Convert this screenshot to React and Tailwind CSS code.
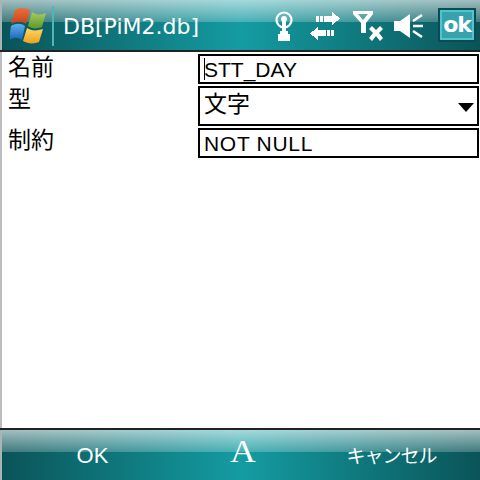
import React from "react";

const barBg =
  "bg-[linear-gradient(180deg,rgba(255,255,255,0.62)_0px,rgba(255,255,255,0.22)_22px,transparent_22px),linear-gradient(90deg,#0a5458_0%,#149ca2_50%,#0a5458_100%)]";

const WinLogo = () => (
  <svg width="36" height="36" viewBox="0 0 36 36" className="shrink-0">
    <defs>
      <linearGradient id="r" x1="0" y1="0" x2="0" y2="1">
        <stop offset="0" stopColor="#e8703a" />
        <stop offset="1" stopColor="#c8401c" />
      </linearGradient>
      <linearGradient id="g" x1="0" y1="0" x2="0" y2="1">
        <stop offset="0" stopColor="#a8cc60" />
        <stop offset="1" stopColor="#5c9a2c" />
      </linearGradient>
      <linearGradient id="b" x1="0" y1="0" x2="0" y2="1">
        <stop offset="0" stopColor="#5cb0ee" />
        <stop offset="1" stopColor="#1c64b8" />
      </linearGradient>
      <linearGradient id="y" x1="0" y1="0" x2="0" y2="1">
        <stop offset="0" stopColor="#fcd860" />
        <stop offset="1" stopColor="#f0a020" />
      </linearGradient>
    </defs>
    <path d="M5 2 C9 -1 15 0 20 2 L16 16 C12 13 7 13 1 16 Z" fill="url(#r)" />
    <path d="M22 4 C26 7 31 7 36 5 L32 19 C27 21 22 21 18 18 Z" fill="url(#g)" />
    <path d="M1 18 C6 15 11 15 15 18 L12 32 C8 29 4 29 -1 32 Z" fill="url(#b)" />
    <path d="M17 20 C21 23 27 23 33 21 L29 34 C24 36 18 36 13 33 Z" fill="url(#y)" />
  </svg>
);

const Antenna = () => (
  <svg width="18" height="30" viewBox="0 0 18 30" fill="white" shapeRendering="crispEdges">
    <circle cx="9" cy="9" r="7.5" fill="none" stroke="white" strokeWidth="2.2" shapeRendering="auto" />
    <circle cx="9" cy="8" r="3" shapeRendering="auto" />
    <rect x="7" y="9" width="4" height="12" />
    <path d="M5 20h8v3h2v7H3v-7h2z" />
  </svg>
);

const Sync = () => (
  <svg width="30" height="28" viewBox="0 0 30 28" fill="white" shapeRendering="crispEdges">
    <path d="M6 4h3v6H6zM10 4h3v6h-3zM14 4h8V0l8 6.5L22 13v-3h-8z" />
    <path d="M8 15v3h8v6H8v4L0 21.5zM17 18h3v6h-3zM21 18h3v6h-3z" />
  </svg>
);

const NoSignal = () => (
  <svg width="30" height="30" viewBox="0 0 30 30" fill="white">
    <path d="M0 0h20v3l-7 9v10H8V12L0 3zM5 3l5 6 5-6z" fillRule="evenodd" />
    <path d="M16 18l3-3 4 4 4-4 3 3-4 4 4 5-3 3-4-5-4 5-3-3 4-5z" />
  </svg>
);

const Speaker = () => (
  <svg width="30" height="24" viewBox="0 0 30 24" fill="white">
    <path d="M0 7h6l10-7v24L6 17H0z" />
    <path d="M19 7l9-6M19 12h10M19 17l9 6" stroke="white" strokeWidth="2.5" fill="none" />
  </svg>
);

const OkBox = () => (
  <div className="w-[38px] h-[34px] border-2 border-[#0e4a50] bg-[#37a2aa] shrink-0">
    <div className="w-full h-full border-2 border-[#4cc6d0] flex items-center justify-center">
      <span className="text-white text-[22px] font-bold leading-none font-['DejaVu_Sans'] tracking-[-1px]">ok</span>
    </div>
  </div>
);

const Field = ({ children, className }) => (
  <div className={`border-2 border-black flex items-center pl-[4px] text-[21px] leading-none text-black ${className}`}>
    {children}
  </div>
);

export default function App() {
  return (
    <div className="w-[480px] h-[480px] flex flex-col bg-white overflow-hidden font-['Liberation_Sans','Noto_Sans_CJK_JP',sans-serif]">
      <header className={`h-[50px] shrink-0 flex items-center border-l-2 border-[#a9b4b4] ${barBg}`}>
        <div className="ml-[8px] mt-[2px]"><WinLogo /></div>
        <div className="ml-[6px] w-[2px] h-[40px] mt-[2px] bg-[#4fb5bb]" />
        <span className="ml-[9px] mt-[3px] text-[22px] leading-none text-white font-['DejaVu_Sans']">DB[PiM2.db]</span>
        <div className="ml-auto flex items-center">
          <div className="mr-[17px] mt-[1px] h-[30px]"><Antenna /></div>
          <div className="mr-[13px] mt-[2px] h-[28px]"><Sync /></div>
          <div className="mr-[11px] mt-[2px] h-[30px]"><NoSignal /></div>
          <div className="mr-[14px] mt-[2px] h-[24px]"><Speaker /></div>
          <div className="mr-[4px]"><OkBox /></div>
        </div>
      </header>
      <div className="h-[2px] shrink-0 bg-[#222]" />
      <main className="flex-1 border-l-2 border-[#bdbdbd] flex flex-col pt-[2px] pl-[6px]">
        <div className="flex h-[30px]">
          <div className="w-[190px] text-[23px] leading-[26px] text-black">名前</div>
          <Field className="w-[281px] h-[30px] relative">
            <span className="absolute left-[4px] top-[2px] w-[1px] h-[22px] bg-black" />
            STT_DAY
          </Field>
        </div>
        <div className="flex h-[42px] mt-[2px]">
          <div className="w-[190px] text-[23px] leading-[26px] text-black">型</div>
          <Field className="w-[281px] h-[40px] justify-between pr-[3px] !items-start pt-[5px] !text-[23px]">
            <span>文字</span>
            <svg width="16" height="9" viewBox="0 0 16 9" className="mt-[10px]"><path d="M0 0h16L8 9z" fill="black" /></svg>
          </Field>
        </div>
        <div className="flex h-[30px]">
          <div className="w-[190px] text-[23px] leading-[26px] text-black -mt-[1px]">制約</div>
          <Field className="w-[281px] h-[30px] tracking-[0.7px]">NOT NULL</Field>
        </div>
      </main>
      <div className="h-[2px] shrink-0 bg-[#222]" />
      <footer className={`h-[50px] shrink-0 flex items-center border-l-2 border-[#a9b4b4] ${barBg}`}>
        <span className="w-[181px] text-center text-white text-[22px] leading-none pt-[2px]">OK</span>
        <span className="flex-1 text-center text-white text-[31px] leading-none font-['Liberation_Serif'] -mt-[7px] scale-x-[1.15]">A</span>
        <span className="w-[177px] text-center text-white text-[19px] tracking-[-1px] leading-none pt-[2px]">キャンセル</span>
      </footer>
    </div>
  );
}
